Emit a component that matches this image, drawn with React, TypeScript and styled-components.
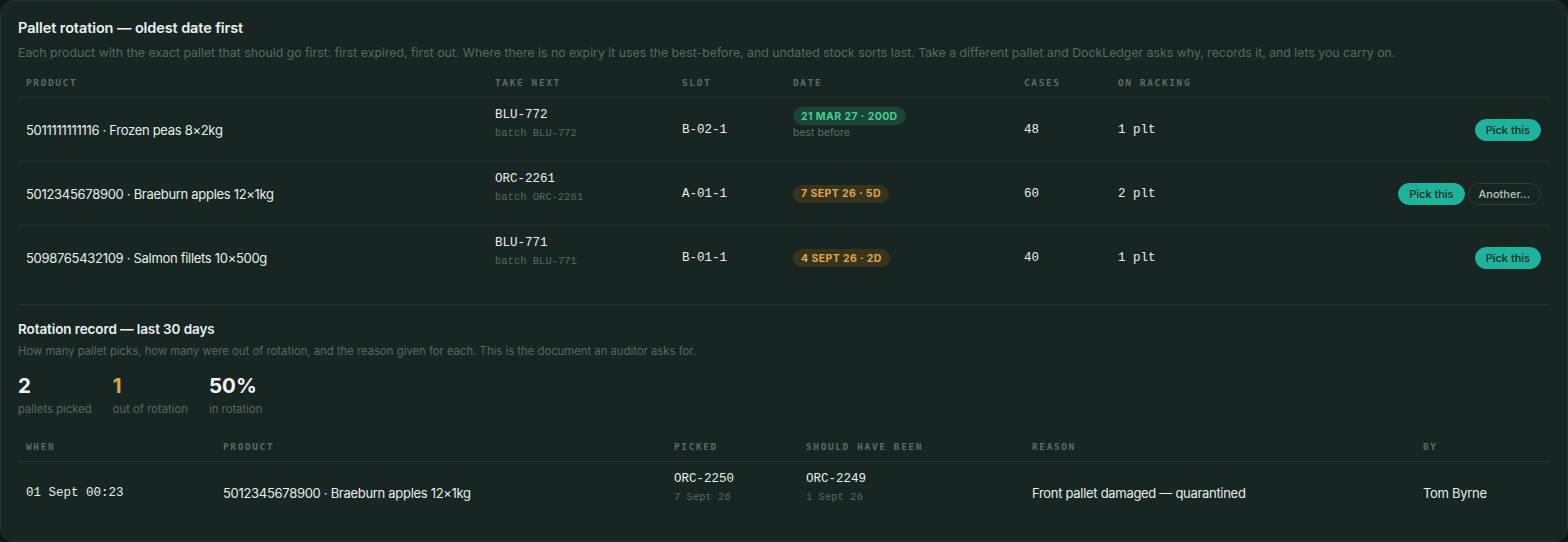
import React from "react";
import styled, { createGlobalStyle } from "styled-components";

const Global = createGlobalStyle`
  html, body { margin: 0; padding: 0; background: #0e1815; }
  body { font-family: "Inter", "Noto Sans", sans-serif; color: #e6eeea; -webkit-font-smoothing: antialiased; }
  * { box-sizing: border-box; }
`;

const Card = styled.div`
  width: 1568px;
  height: 542px;
  background: #172622;
  border: 1px solid #24342f;
  border-radius: 14px;
  padding: 17px 17px 0 17px;
  overflow: hidden;
`;

const Title = styled.h2`
  margin: 0;
  font-size: 14.5px;
  font-weight: 600;
  line-height: 20px;
  color: #e9f0ed;
  letter-spacing: -0.1px;
`;

const SubTitle = styled.h3`
  margin: 0;
  font-size: 13.5px;
  font-weight: 600;
  line-height: 20px;
  color: #e9f0ed;
  letter-spacing: -0.1px;
`;

const Lead = styled.p<{ $small?: boolean }>`
  margin: ${(p) => (p.$small ? "3px 0 0" : "6px 0 0")};
  font-size: ${(p) => (p.$small ? "11.3px" : "12.3px")};
  line-height: 18px;
  color: #56695f;
`;

const MonoHead = `"DejaVu Sans Mono", "Liberation Mono", monospace`;
const Mono = `"Liberation Mono", "DejaVu Sans Mono", monospace`;

const Grid = styled.div<{ $cols: string }>`
  display: grid;
  grid-template-columns: ${(p) => p.$cols};
  align-items: center;
`;

const HeadRow = styled(Grid)<{ $h: number; $pt?: number }>`
  height: ${(p) => p.$h}px;
  padding-top: ${(p) => p.$pt ?? 0}px;
  border-bottom: 1px solid #24342f;
`;

const Th = styled.div`
  padding-left: 8px;
  font-family: ${MonoHead};
  font-size: 9.5px;
  font-weight: 700;
  letter-spacing: 1.6px;
  color: #5b6c65;
  text-transform: uppercase;
`;

const Row = styled(Grid)<{ $h: number; $line?: boolean }>`
  height: ${(p) => p.$h}px;
  border-bottom: ${(p) => (p.$line ? "1px solid #24342f" : "none")};
`;

const Td = styled.div`
  padding-left: 8px;
  font-size: 13px;
  letter-spacing: -0.3px;
  color: #e6eeea;
  display: flex;
  flex-direction: column;
  justify-content: center;
`;

const StackTd = styled(Td)<{ $top: number }>`
  align-self: start;
  justify-content: flex-start;
  padding-top: ${(p) => p.$top}px;
  letter-spacing: 0;
`;

const MonoText = styled.span`
  font-family: ${Mono};
  font-size: 12.5px;
  color: #e8efec;
  line-height: 18px;
  letter-spacing: 0;
`;

const MonoSub = styled.span`
  font-family: ${Mono};
  font-size: 10.5px;
  color: #56695f;
  line-height: 18px;
  letter-spacing: 0;
`;

const Pill = styled.span<{ $tone: "green" | "amber" }>`
  align-self: flex-start;
  display: inline-flex;
  align-items: center;
  height: 18px;
  padding: 0 8px;
  border-radius: 9px;
  font-size: 10.5px;
  font-weight: 700;
  letter-spacing: 0.4px;
  background: ${(p) => (p.$tone === "green" ? "#1b4536" : "#37341d")};
  color: ${(p) => (p.$tone === "green" ? "#47cf93" : "#e1a64a")};
`;

const Note = styled.span`
  font-size: 10.5px;
  letter-spacing: 0;
  color: #5b6e66;
  line-height: 16px;
`;

const Actions = styled.div`
  display: flex;
  justify-content: flex-end;
  gap: 3px;
  padding-right: 9px;
`;

const Btn = styled.button<{ $primary?: boolean }>`
  height: 22px;
  padding: 0 10px;
  border-radius: 11px;
  font-family: "Inter", sans-serif;
  font-size: 11px;
  font-weight: 500;
  cursor: pointer;
  border: 1px solid ${(p) => (p.$primary ? "#1fb39c" : "#2e3d38")};
  background: ${(p) => (p.$primary ? "#1fb39c" : "transparent")};
  color: ${(p) => (p.$primary ? "#0f2b26" : "#b8c5bf")};
`;

const TableWrap = styled.div<{ $mt: number }>`
  margin-top: ${(p) => p.$mt}px;
`;

const Section = styled.section`
  margin-top: 14px;
  border-top: 1px solid #24342f;
  padding-top: 14px;
`;

const Stats = styled.div`
  display: flex;
  gap: 21px;
  margin-top: 13px;
`;

const Stat = styled.div`
  display: flex;
  flex-direction: column;
`;

const StatNum = styled.span<{ $amber?: boolean }>`
  font-size: 20.5px;
  font-weight: 700;
  line-height: 26px;
  color: ${(p) => (p.$amber ? "#e1a64a" : "#f0f5f2")};
`;

const StatLabel = styled.span`
  font-size: 11.3px;
  line-height: 16px;
  color: #56695f;
  margin-top: 2px;
`;

const cols1 = "469px 187px 111px 231px 94px 1fr auto";
const cols2 = "197px 451px 132px 226px 391px 1fr";

const rotation = [
  { product: "5011111111116 · Frozen peas 8×2kg", next: "BLU-772", slot: "B-02-1", date: "21 MAR 27 · 200D", tone: "green" as const, note: "best before", cases: "48", rack: "1 plt", another: false },
  { product: "5012345678900 · Braeburn apples 12×1kg", next: "ORC-2261", slot: "A-01-1", date: "7 SEPT 26 · 5D", tone: "amber" as const, note: "", cases: "60", rack: "2 plt", another: true },
  { product: "5098765432109 · Salmon fillets 10×500g", next: "BLU-771", slot: "B-01-1", date: "4 SEPT 26 · 2D", tone: "amber" as const, note: "", cases: "40", rack: "1 plt", another: false },
];

export default function App() {
  return (
    <>
      <Global />
      <Card>
        <Title>Pallet rotation — oldest date first</Title>
        <Lead>
          Each product with the exact pallet that should go first: first expired, first out. Where there is no expiry it uses the best-before, and undated stock sorts last. Take a different pallet and DockLedger asks why, records it, and lets you carry on.
        </Lead>
        <TableWrap $mt={4}>
          <HeadRow $cols={cols1} $h={32} $pt={2}>
            <Th>Product</Th>
            <Th>Take next</Th>
            <Th>Slot</Th>
            <Th>Date</Th>
            <Th>Cases</Th>
            <Th>On racking</Th>
            <div />
          </HeadRow>
          {rotation.map((r, i) => (
            <Row key={r.next} $cols={cols1} $h={64} $line={i < rotation.length - 1}>
              <Td>{r.product}</Td>
              <StackTd $top={8}>
                <MonoText>{r.next}</MonoText>
                <MonoSub>batch {r.next}</MonoSub>
              </StackTd>
              <Td>
                <MonoText>{r.slot}</MonoText>
              </Td>
              {r.note ? (
                <StackTd $top={9}>
                  <Pill $tone={r.tone}>{r.date}</Pill>
                  <Note>{r.note}</Note>
                </StackTd>
              ) : (
                <Td>
                  <Pill $tone={r.tone}>{r.date}</Pill>
                </Td>
              )}
              <Td>
                <MonoText>{r.cases}</MonoText>
              </Td>
              <Td>
                <MonoText>{r.rack}</MonoText>
              </Td>
              <Actions>
                <Btn $primary>Pick this</Btn>
                {r.another && <Btn>Another...</Btn>}
              </Actions>
            </Row>
          ))}
        </TableWrap>
        <Section>
          <SubTitle>Rotation record — last 30 days</SubTitle>
          <Lead $small>
            How many pallet picks, how many were out of rotation, and the reason given for each. This is the document an auditor asks for.
          </Lead>
          <Stats>
            <Stat>
              <StatNum>2</StatNum>
              <StatLabel>pallets picked</StatLabel>
            </Stat>
            <Stat>
              <StatNum $amber>1</StatNum>
              <StatLabel>out of rotation</StatLabel>
            </Stat>
            <Stat>
              <StatNum>50%</StatNum>
              <StatLabel>in rotation</StatLabel>
            </Stat>
          </Stats>
          <TableWrap $mt={15}>
            <HeadRow $cols={cols2} $h={30}>
              <Th>When</Th>
              <Th>Product</Th>
              <Th>Picked</Th>
              <Th>Should have been</Th>
              <Th>Reason</Th>
              <Th>By</Th>
            </HeadRow>
            <Row $cols={cols2} $h={62}>
              <Td>
                <MonoText>01 Sept 00:23</MonoText>
              </Td>
              <Td>5012345678900 · Braeburn apples 12×1kg</Td>
              <StackTd $top={8}>
                <MonoText>ORC-2250</MonoText>
                <MonoSub>7 Sept 26</MonoSub>
              </StackTd>
              <StackTd $top={8}>
                <MonoText>ORC-2249</MonoText>
                <MonoSub>1 Sept 26</MonoSub>
              </StackTd>
              <Td>Front pallet damaged — quarantined</Td>
              <Td>Tom Byrne</Td>
            </Row>
          </TableWrap>
        </Section>
      </Card>
    </>
  );
}
